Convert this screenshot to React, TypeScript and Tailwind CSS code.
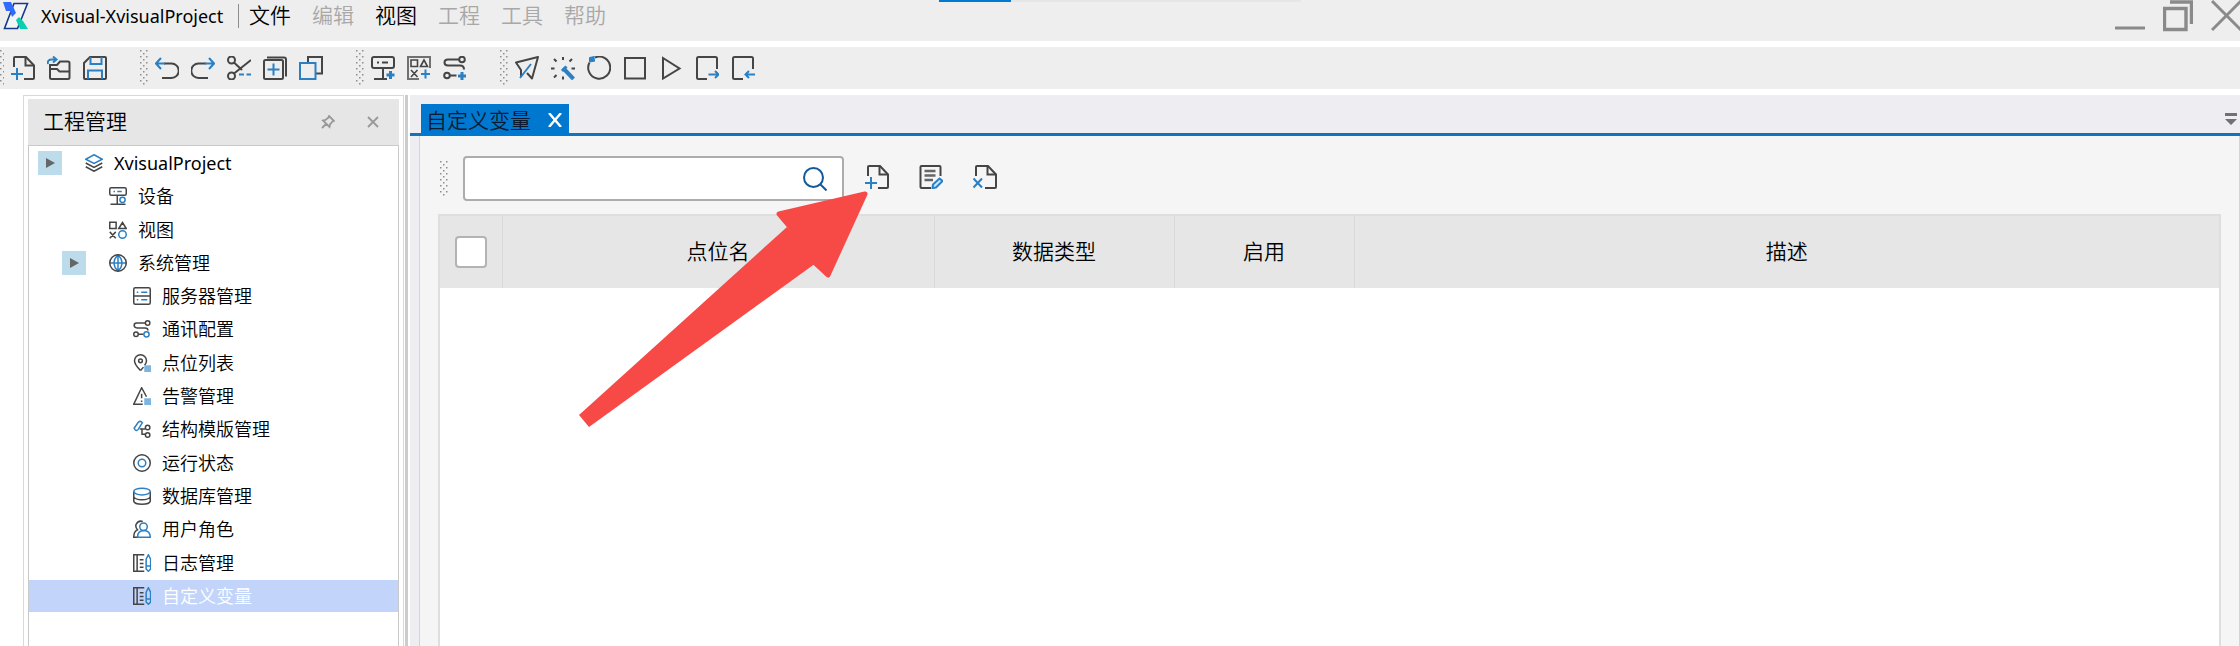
import { useState, type ReactNode } from "react";

const DARK = "#454545";
const BLUE = "#2b80c4";

type IconProps = { children: ReactNode; className?: string };

function Icon({ children, className = "size-6" }: IconProps) {
  return (
    <svg
      viewBox="0 0 24 24"
      fill="none"
      stroke={DARK}
      strokeWidth="2"
      className={`${className} shrink-0`}
      aria-hidden="true"
    >
      {children}
    </svg>
  );
}

function Logo() {
  return (
    <svg viewBox="0 0 26 28" className="h-7 w-[26px] shrink-0" aria-hidden="true">
      <path d="M11 1.5H24.5L14.5 26.5H1.5Z" fill="#f4f4f4" stroke="#143a8c" strokeWidth="1.6" />
      <path d="M0 0H8L13 11L9 15L7 9H3Z" fill="#2f6bff" />
      <path d="M13 18L16 15L20 19L25 27H17Z" fill="#08cfae" />
    </svg>
  );
}

function Grip({ id, className }: { id: string; className: string }) {
  return (
    <svg className={`${className} shrink-0`} aria-hidden="true">
      <defs>
        <pattern id={id} width="6" height="6" patternUnits="userSpaceOnUse">
          <rect x="0" y="0" width="1.5" height="1.5" fill="#8d8d8d" />
          <rect x="3" y="3" width="1.5" height="1.5" fill="#8d8d8d" />
        </pattern>
      </defs>
      <rect width="100%" height="100%" fill={`url(#${id})`} />
    </svg>
  );
}

const icons = {
  newFile: (
    <>
      <path d="M3 11V2q0-1 1-1H15L23 9.5V22q0 1-1 1H13" />
      <path d="M14.5 1V9.5H23" />
      <path d="M0 18H12M6 12V24" stroke={BLUE} />
    </>
  ),
  open: (
    <>
      <path d="M3 21V9H10L13 5.5H21q1.5 0 1.5 1.5V21.500q0 1.500-1.500 1.500H4.500q-1.500 0-1.500-1.500V13H10L12.500 15.500H22.500" />
      <path d="M1 8Q0 3.500 5 3.500H9M6 .5L9.500 3.500L6 6.500" stroke={BLUE} />
    </>
  ),
  save: (
    <>
      <path d="M1 7L7 1H22q1 0 1 1V22q0 1-1 1H2q-1 0-1-1Z" />
      <path d="M7.500 1V8H18.500V1M5 23V14.500H19V23" stroke={BLUE} />
    </>
  ),
  undo: (
    <>
      <path d="M9 7.500H16.500A7 7 0 0 1 16.500 22H7" />
      <path d="M10 7.500H1M6 2L1 7.500L6 13" stroke={BLUE} />
    </>
  ),
  redo: (
    <>
      <path d="M15 7.500H7.500A7 7 0 0 0 7.500 22H17" />
      <path d="M14 7.500H23M18 2L23 7.500L18 13" stroke={BLUE} />
    </>
  ),
  cut: (
    <>
      <circle cx="4.500" cy="4" r="3.500" />
      <circle cx="4.500" cy="20" r="3.500" />
      <path d="M7 6.500L15 14M7 17.500L24 4" />
      <path d="M12 18.500H17M19.500 18.500H24" stroke={BLUE} />
    </>
  ),
  addCopy: (
    <>
      <rect x="1" y="4" width="19" height="19" rx="1.500" />
      <path d="M4 1.500H21q2 0 2 2V20.500" />
      <path d="M4.500 13.500H16.500M10.500 7.500V19.500" stroke={BLUE} />
    </>
  ),
  windows: (
    <>
      <path d="M9 6V1H23V17.500H17" />
      <rect x="1" y="7" width="15.500" height="16" stroke={BLUE} />
    </>
  ),
  deviceAdd: (
    <>
      <rect x="1" y="1" width="22" height="11" rx="2" />
      <path d="M6 6.500H8M11 6.500H17M12 12V23M3 23H16" />
      <path d="M19.500 15V23M15.500 19H23.500" stroke={BLUE} strokeWidth="3" />
    </>
  ),
  viewAdd: (
    <>
      <path d="M1 24V1H23V12M1 23H12" stroke="#707070" />
      <path d="M4 4H10.500V10.500H4ZM13.500 10.500L17 4L20.500 10.500ZM4 14L10.500 21M10.500 14L4 21" strokeWidth="1.600" />
      <path d="M18.500 13.500V22.500M14 18H23" stroke={BLUE} />
    </>
  ),
  routeAdd: (
    <>
      <circle cx="19" cy="3.500" r="2.800" />
      <circle cx="4" cy="19.500" r="2.800" />
      <path d="M16 3.500H5Q1.500 3.500 1.500 6.500T5 9.500H17Q21 9.500 21 13.500M7 19.500H13.500" />
      <path d="M19 16V24M15 20H23" stroke={BLUE} strokeWidth="3" />
    </>
  ),
  send: (
    <>
      <path d="M6 21V14L1 6.500L23 1L17 22.500L12 17" strokeLinejoin="round" />
      <path d="M16 8L5 22" stroke={BLUE} />
    </>
  ),
  debug: (
    <>
      <path d="M12 1V4M3 3L5.500 5.500M21 3L18.500 5.500M0 12.500H3.500M20.500 12.500H24M3 21.500L5.500 19M12 20.500V23.500" />
      <path d="M12 12L22.500 23" stroke={BLUE} strokeWidth="4" />
      <path d="M11 15L15.500 10.500" stroke={BLUE} strokeWidth="3" />
    </>
  ),
  reload: (
    <>
      <path d="M8 1.500A11 11 0 1 1 2.500 6.500" />
      <path d="M7.500 .5L2.500 1.500V6L8 5" stroke={BLUE} fill={BLUE} strokeWidth="1" />
    </>
  ),
  stop: <rect x="2" y="2" width="20" height="20.500" />,
  play: <path d="M4 2L20.500 12.500L4 22.500Z" />,
  exportIcon: (
    <>
      <path d="M12 23H3.500q-1.500 0-1.500-1.500V2.500q0-1.500 1.500-1.500H20.500q1.500 0 1.500 1.500V13" />
      <path d="M13.500 18.500H23.500M20 15L23.500 18.500L20 22" stroke={BLUE} />
    </>
  ),
  importIcon: (
    <>
      <path d="M12 23H3.500q-1.500 0-1.500-1.500V2.500q0-1.500 1.500-1.500H20.500q1.500 0 1.500 1.500V13" />
      <path d="M24.500 18.500H14.500M18 15L14.500 18.500L18 22" stroke={BLUE} />
    </>
  ),
  edit: (
    <>
      <path d="M12 23H2.500q-1 0-1-1V2q0-1 1-1H20.500q1 0 1 1V11" />
      <path d="M5.500 6H16.500M5.500 10.500H16.500M5.500 15H14" stroke="#666" strokeWidth="2.400" />
      <path d="M13.500 23L14 19.500L20.500 13.500L23.500 16L17 22.500Z" stroke={BLUE} fill="#cfe6f7" />
    </>
  ),
  removeFile: (
    <>
      <path d="M3 11V2q0-1 1-1H15L23 9.500V22q0 1-1 1H12" />
      <path d="M14.500 1V9.500H23" />
      <path d="M0.500 13.500L9 22.500M9 13.500L0.500 22.500" stroke={BLUE} />
    </>
  ),
  layers: (
    <>
      <path d="M12 1L23 7L12 12.500L1 7Z" stroke={BLUE} />
      <path d="M1 12L12 18L23 12M1 17L12 23L23 17" />
    </>
  ),
  device: (
    <>
      <rect x="1" y="1" width="22" height="10" rx="2" />
      <path d="M11 11V23M2 23H22" />
      <path d="M6 6H8M11 6H17" stroke={BLUE} />
      <circle cx="18" cy="17" r="3.500" stroke={BLUE} fill="#fff" />
    </>
  ),
  view: (
    <>
      <path d="M1 1.500H9.500V10H1ZM13 10L18 2L23 10ZM1 14.500L9 23M9 14.500L1 23" />
      <circle cx="18" cy="18" r="5" stroke={BLUE} />
    </>
  ),
  globe: (
    <>
      <path d="M12 1C5 8 5 16 12 23M12 1C19 8 19 16 12 23M12 1V23M1 12H23" stroke={BLUE} />
      <circle cx="12" cy="12" r="11" />
    </>
  ),
  server: (
    <>
      <rect x="1" y="1" width="22" height="22" rx="2" />
      <path d="M1 12H23" />
      <path d="M5 7H7M11 7H19M5 17H7M11 17H19" stroke={BLUE} />
    </>
  ),
  route: (
    <>
      <circle cx="19.500" cy="4" r="3" />
      <circle cx="4" cy="19" r="3" />
      <path d="M16.500 4H5Q1.500 4 1.500 7T5 10.500H16Q20 10.500 20 14M7 19H14" />
      <circle cx="18" cy="19" r="3.500" stroke={BLUE} />
    </>
  ),
  pin: (
    <>
      <path d="M10 22Q2 14 2 9A8 8 0 0 1 18 9Q18 12 15.500 15" />
      <path d="M10 22L14 17.500" />
      <circle cx="10" cy="9" r="2.500" />
      <rect x="15" y="15" width="9" height="9" fill="#7db5e0" stroke="none" />
    </>
  ),
  alarm: (
    <>
      <path d="M13 23H1L11.500 1L18 13M11.500 9V15M11.500 18V20" />
      <rect x="15" y="15" width="9" height="9" fill="#7db5e0" stroke="none" />
    </>
  ),
  template: (
    <>
      <path d="M1.500 11L7 3Q10 .5 12.500 3.500L7 12.500Q4 16 1.500 11Z" stroke={BLUE} />
      <path d="M9 12H16M12 12V19H16" />
      <circle cx="19.500" cy="10" r="3" />
      <circle cx="19.500" cy="20" r="3" />
    </>
  ),
  status: (
    <>
      <circle cx="12" cy="12" r="11" />
      <circle cx="12" cy="12" r="5" stroke={BLUE} />
    </>
  ),
  database: (
    <>
      <path d="M1 6V19Q2 23 12 23T23 19V6M1 13Q3 17 12 17T23 13" />
      <ellipse cx="12" cy="6" rx="11" ry="4.500" stroke={BLUE} />
    </>
  ),
  users: (
    <>
      <path d="M7 23H1Q1 15 6 13Q3 10 4 6Q7 0 13 2" />
      <circle cx="14" cy="9" r="5" stroke={BLUE} />
      <path d="M6 23Q6 14 14.500 14T23 23Z" stroke={BLUE} />
    </>
  ),
  log: (
    <>
      <path d="M15 1H1V23H15M5.500 1V23M9 7.500H14M9 12.500H14M9 17.500H14" />
      <path d="M17.500 7L20.500 1L23.500 7V20L20.500 23L17.500 20ZM17.500 16H23.500" stroke={BLUE} />
    </>
  ),
};

type IconName = keyof typeof icons;

const menus = [
  { name: "文件", enabled: true },
  { name: "编辑", enabled: false },
  { name: "视图", enabled: true },
  { name: "工程", enabled: false },
  { name: "工具", enabled: false },
  { name: "帮助", enabled: false },
];

const fileTools: [IconName, string][] = [
  ["newFile", "新建"],
  ["open", "打开"],
  ["save", "保存"],
];
const editTools: [IconName, string][] = [
  ["undo", "撤销"],
  ["redo", "重做"],
  ["cut", "剪切"],
  ["addCopy", "复制"],
  ["windows", "粘贴"],
];
const addTools: [IconName, string][] = [
  ["deviceAdd", "添加设备"],
  ["viewAdd", "添加视图"],
  ["routeAdd", "添加通讯"],
];
const runTools: [IconName, string][] = [
  ["send", "发布"],
  ["debug", "调试"],
  ["reload", "刷新"],
  ["stop", "停止"],
  ["play", "运行"],
  ["exportIcon", "导出"],
  ["importIcon", "导入"],
];

const tree: { name: string; icon: IconName; level: number; expander?: boolean }[] = [
  { name: "XvisualProject", icon: "layers", level: 0, expander: true },
  { name: "设备", icon: "device", level: 1 },
  { name: "视图", icon: "view", level: 1 },
  { name: "系统管理", icon: "globe", level: 1, expander: true },
  { name: "服务器管理", icon: "server", level: 2 },
  { name: "通讯配置", icon: "route", level: 2 },
  { name: "点位列表", icon: "pin", level: 2 },
  { name: "告警管理", icon: "alarm", level: 2 },
  { name: "结构模版管理", icon: "template", level: 2 },
  { name: "运行状态", icon: "status", level: 2 },
  { name: "数据库管理", icon: "database", level: 2 },
  { name: "用户角色", icon: "users", level: 2 },
  { name: "日志管理", icon: "log", level: 2 },
  { name: "自定义变量", icon: "log", level: 2 },
];

const levelPadding = ["pl-[9px]", "pl-[33px]", "pl-[57px]"];

function ToolGroup({ items }: { items: [IconName, string][] }) {
  return (
    <div className="flex gap-3">
      {items.map(([icon, label]) => (
        <button key={icon} type="button" aria-label={label}>
          <Icon>{icons[icon]}</Icon>
        </button>
      ))}
    </div>
  );
}

function TitleBar() {
  return (
    <header className="relative flex h-[41px] items-start bg-[#eeeeee] pl-[3px]">
      <div className="absolute top-0 left-[939px] flex h-0.5 w-[362px] bg-[#e6e6e6]">
        <div className="w-[72px] bg-[#0078d4]" />
      </div>
      <div className="flex h-8 items-center">
        <Logo />
        <h1 className="ml-3 w-[197px] text-lg font-normal whitespace-nowrap">Xvisual-XvisualProject</h1>
        <div className="h-6 w-px bg-[#8c8c8c]" />
        <nav className="ml-[10px] flex gap-[21px]">
          {menus.map((menu) => (
            <button
              key={menu.name}
              type="button"
              disabled={!menu.enabled}
              className="text-[21px] whitespace-nowrap text-black disabled:text-[#a8a8a8]"
            >
              {menu.name}
            </button>
          ))}
        </nav>
      </div>
      <div className="ml-auto flex gap-[18px] overflow-hidden">
        <button type="button" aria-label="最小化">
          <svg viewBox="0 0 30 32" className="h-8 w-[30px]" stroke="#8a8a8a" strokeWidth="3">
            <path d="M0 28H30" />
          </svg>
        </button>
        <button type="button" aria-label="还原">
          <svg viewBox="0 0 30 32" className="h-8 w-[30px]" fill="none" stroke="#8a8a8a" strokeWidth="3.400">
            <path d="M1.500 8.500H23V29.500H1.500ZM7 2H28.500V24" />
          </svg>
        </button>
        <button type="button" aria-label="关闭" className="-mr-px">
          <svg viewBox="0 0 30 32" className="h-8 w-[30px]" stroke="#8a8a8a" strokeWidth="3">
            <path d="M1 1L30 30M30 1L1 30" />
          </svg>
        </button>
      </div>
    </header>
  );
}

function Toolbar() {
  return (
    <div className="mt-1.5 flex h-[42px] items-center bg-[#eeeeee]">
      <Grip id="grip-file" className="mr-[7px] h-9 w-1" />
      <ToolGroup items={fileTools} />
      <Grip id="grip-edit" className="mr-[7px] ml-[33px] h-9 w-2" />
      <ToolGroup items={editTools} />
      <Grip id="grip-add" className="mr-[7px] ml-[33px] h-9 w-2" />
      <ToolGroup items={addTools} />
      <Grip id="grip-run" className="mr-[7px] ml-[33px] h-9 w-2" />
      <ToolGroup items={runTools} />
    </div>
  );
}

function ProjectPanel() {
  const [selected, setSelected] = useState("自定义变量");

  return (
    <aside className="ml-[23px] flex w-[381px] shrink-0 flex-col border-x border-t border-[#d9d9d9] px-1 pt-[3px]">
      <div className="flex h-[46px] items-center bg-[#e6e6e6] pr-5 pl-[15px]">
        <h2 className="text-[21px] font-[350]">工程管理</h2>
        <button type="button" aria-label="固定" className="ml-auto">
          <svg viewBox="0 0 14 14" className="size-3.5" fill="none" stroke="#999" strokeWidth="1.800">
            <path d="M8 1L13 6L11.500 6.500L9 9.500L8.500 12L2 5.500L4.500 5L7.500 2.500ZM5 9L1 13" />
          </svg>
        </button>
        <button type="button" aria-label="关闭面板" className="ml-8">
          <svg viewBox="0 0 12 12" className="size-3" stroke="#999" strokeWidth="1.800">
            <path d="M1 1L11 11M11 1L1 11" />
          </svg>
        </button>
      </div>
      <div className="flex-1 border-x border-t border-[#c9c9c9] pt-px">
        <ul className="flex h-[465px] flex-col justify-between">
          {tree.map((node) => (
            <li
              key={node.name}
              className={`flex h-8 items-center ${levelPadding[node.level]} ${
                selected === node.name ? "bg-[#c3d4fb] text-white" : "text-black"
              }`}
            >
              {node.expander ? (
                <button
                  type="button"
                  aria-label={`展开 ${node.name}`}
                  className="flex size-6 items-center justify-center bg-[#bcdcec]"
                >
                  <svg viewBox="0 0 10 10" className="size-2.5" fill="#666">
                    <path d="M1 0L10 5L1 10Z" />
                  </svg>
                </button>
              ) : (
                <span className="size-6" />
              )}
              <button
                type="button"
                onClick={() => setSelected(node.name)}
                className={`ml-[23px] flex items-center gap-[11px] text-lg leading-8 whitespace-nowrap ${
                  node.level === 0 ? "font-normal" : ""
                }`}
              >
                <Icon className="size-[18px]">{icons[node.icon]}</Icon>
                {node.name}
              </button>
            </li>
          ))}
        </ul>
      </div>
    </aside>
  );
}

function VariableTable() {
  return (
    <div className="mx-[18px] flex-1 border-x-2 border-t-2 border-[#dedede] bg-white">
      <table className="w-full table-fixed border-collapse">
        <thead>
          <tr className="h-[72px] bg-[#e6e6e6] text-[21px]">
            <th className="w-[62px] border-r border-[#d9d9d9] p-0">
              <input
                type="checkbox"
                aria-label="全选"
                className="mx-auto block size-8 appearance-none rounded border-2 border-[#b3b3b3] bg-white checked:bg-[#0078d4]"
              />
            </th>
            <th className="w-[432px] border-r border-[#d9d9d9] p-0 font-[350]">点位名</th>
            <th className="w-[240px] border-r border-[#d9d9d9] p-0 font-[350]">数据类型</th>
            <th className="w-[180px] border-r border-[#d9d9d9] p-0 font-[350]">启用</th>
            <th className="p-0 font-[350]">描述</th>
          </tr>
        </thead>
        <tbody />
      </table>
    </div>
  );
}

function DocumentArea() {
  return (
    <main className="flex min-w-0 flex-1 flex-col bg-[#eeeef2]">
      <div className="flex h-[41px] items-end border-b-[3px] border-[#0e74bb] pl-[11px]">
        <div className="-mb-[3px] flex h-8 items-center bg-[#0078cf] pr-[7px] pl-[5px]">
          <button type="button" className="text-[21px] leading-8 text-[#0b1a30]">
            自定义变量
          </button>
          <button type="button" aria-label="关闭标签" className="ml-[17px]">
            <svg viewBox="0 0 14 14" className="size-3.5" stroke="#fff" strokeWidth="2.400">
              <path d="M1 0L13 14M13 0L1 14" />
            </svg>
          </button>
        </div>
        <button type="button" aria-label="标签列表" className="mr-[3px] mb-2 ml-auto">
          <svg viewBox="0 0 12 12" className="size-3" fill="#717171">
            <path d="M0 0H12V3H0ZM0 6H12L6 12Z" />
          </svg>
        </button>
      </div>
      <div className="ml-[9px] flex flex-1 flex-col border-x border-[#d3d3df] bg-[#f5f5f5]">
        <div className="flex h-[78px] items-start pt-5 pl-5">
          <div className="flex items-center">
            <Grip id="grip-search" className="h-9 w-[9px]" />
            <div className="ml-[14px] flex h-[45px] w-[381px] items-center rounded border-2 border-[#acacac] bg-white pr-[15px] pl-2">
              <input
                type="text"
                aria-label="搜索变量"
                className="min-w-0 flex-1 text-lg outline-none"
              />
              <button type="button" aria-label="搜索">
                <svg viewBox="0 0 24 24" className="size-6" fill="none" stroke="#12599c" strokeWidth="2">
                  <circle cx="10.500" cy="10.500" r="9.500" />
                  <path d="M17 17L23.500 23.500" />
                </svg>
              </button>
            </div>
            <div className="ml-[21px] flex gap-[30px] pb-1">
              <button type="button" aria-label="新增变量">
                <Icon>{icons.newFile}</Icon>
              </button>
              <button type="button" aria-label="编辑变量">
                <Icon>{icons.edit}</Icon>
              </button>
              <button type="button" aria-label="删除变量">
                <Icon>{icons.removeFile}</Icon>
              </button>
            </div>
          </div>
        </div>
        <VariableTable />
      </div>
    </main>
  );
}

// red pointer towards the add button
function PointerArrow() {
  return (
    <svg
      viewBox="0 0 290 238"
      className="pointer-events-none absolute top-[190px] left-[578px] h-[238px] w-[290px]"
      fill="#f74a46"
      stroke="#f74a46"
      aria-hidden="true"
    >
      <path d="M209 37L1 225L11 237L238 73Z" stroke="none" />
      <path
        d="M287 4L201 24L212 37L236 72L250 85Z"
        strokeWidth="5"
        strokeLinejoin="round"
      />
    </svg>
  );
}

function App() {
  return (
    <div className="relative flex min-h-screen flex-col overflow-hidden bg-white font-['Noto_Sans','Noto_Sans_CJK_SC',sans-serif] font-[350] text-black">
      <TitleBar />
      <Toolbar />
      <div className="mt-1.5 flex flex-1">
        <ProjectPanel />
        <div className="mr-0.5 ml-px w-[3px] bg-[#cccccc]" />
        <DocumentArea />
      </div>
      <PointerArrow />
    </div>
  );
}

export default App;
